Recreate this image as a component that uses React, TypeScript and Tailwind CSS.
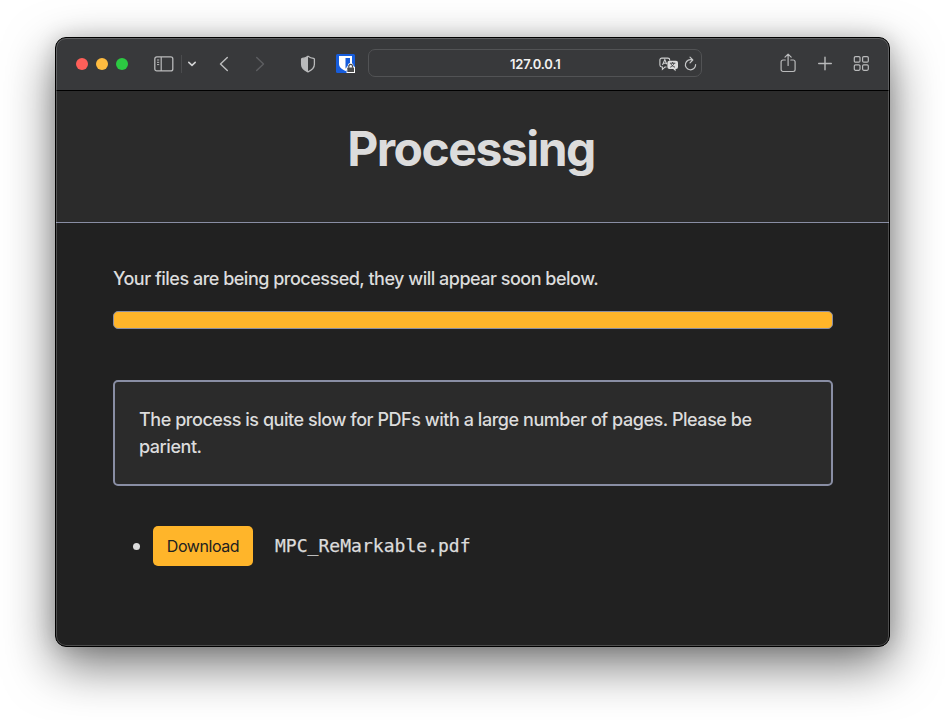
import React from "react";

function SidebarIcon() {
  return (
    <svg width="20" height="16" viewBox="0 0 20 16" fill="none" stroke="#b9babb" className="ml-[26px] shrink-0">
      <rect x="0.8" y="0.9" width="18" height="14" rx="2" strokeWidth="1.3" />
      <path d="M7.2 1v14" strokeWidth="1.2" />
      <path d="M3 4h2.2M3 6.3h2.2M3 8.6h2.2" strokeWidth="1" />
    </svg>
  );
}

function ShieldIcon() {
  return (
    <svg width="16" height="18" viewBox="0 0 16 18" className="ml-[35px] shrink-0">
      <path d="M8 1.2c1.8 1.3 3.7 2 5.6 2.2.5.1.8.4.8.9v4.9c0 3.7-2.4 5.9-6.4 7.6-4-1.7-6.4-3.9-6.4-7.6V4.300c0-.5.3-.8.8-.9C4.300 3.200 6.200 2.500 8 1.200Z" fill="none" stroke="#b9babb" strokeWidth="1.3" />
      <path d="M8 1.200v15.600c-4-1.700-6.400-3.900-6.400-7.600V4.300c0-.5.3-.8.8-.9C4.300 3.200 6.200 2.500 8 1.200Z" fill="#b9babb" />
    </svg>
  );
}

function VaultIcon() {
  return (
    <svg width="20" height="20" viewBox="0 0 20 20" className="ml-[20px] shrink-0">
      <rect x="0" y="0" width="19" height="19" rx="1.5" fill="#175ddc" />
      <path d="M3 2h13v8c0 3-2.500 5-6.500 7C5.500 15 3 13 3 10Z" fill="#fff" />
      <path d="M9.500 4h4.500v6c0 2-1.500 3.200-4.500 4.500Z" fill="#175ddc" />
      <path d="M10.500 19v-6l1.300-1V11.800a2.800 2.800 0 0 1 5.600 0v.2l1.600 1V19Z" fill="#fff" />
      <rect x="11.300" y="13.600" width="6.700" height="4.500" rx="0.600" fill="#4b4b4b" />
      <path d="M12.800 13.800v-1.500a1.850 1.850 0 0 1 3.700 0v1.500" fill="none" stroke="#4b4b4b" strokeWidth="1.200" />
    </svg>
  );
}

function TranslateIcon() {
  return (
    <svg width="20" height="15" viewBox="0 0 20 15" className="shrink-0">
      <path d="M7.500 10H6l-2.600 2.300V10H2.800A1.900 1.900 0 0 1 .9 8.100V3A1.900 1.900 0 0 1 2.800 1.100h6A1.900 1.900 0 0 1 10.700 3v.4" fill="none" stroke="#d0d1d2" strokeWidth="1.100" />
      <path d="M3.500 8 5.800 2.600 7.800 7.300M4.400 6.200h2.800" fill="none" stroke="#d0d1d2" strokeWidth="1.100" />
      <path d="M10.400 3.700h6.600a2 2 0 0 1 2 2v4.400a2 2 0 0 1-2 2h-.4v2.200l-2.400-2.200h-3.800a2 2 0 0 1-2-2V5.700a2 2 0 0 1 2-2Z" fill="#dcdcdc" />
      <path d="M10.900 6.200h5.400M13.600 5v1.200M11.200 10.200c2-.8 3.300-2 3.800-4M12 6.700c.5 1.700 1.900 2.800 4 3.500" fill="none" stroke="#38393b" strokeWidth="0.900" />
    </svg>
  );
}

function Toolbar() {
  return (
    <div className="flex h-[53px] items-center border-b border-black bg-[#38393b] pl-[20px]">
      <div className="flex shrink-0 gap-[8px]">
        <span className="size-[12px] rounded-full bg-[#ff5f59]" />
        <span className="size-[12px] rounded-full bg-[#ffbc40]" />
        <span className="size-[12px] rounded-full bg-[#2cc942]" />
      </div>
      <SidebarIcon />
      <span className="ml-[7px] h-[18px] w-px bg-[#4b4c4e]" />
      <svg width="10" height="6" viewBox="0 0 10 6" fill="none" stroke="#d2d3d4" strokeWidth="1.600" strokeLinecap="round" strokeLinejoin="round" className="ml-[5px] shrink-0">
        <path d="M1.800 1.400 5 4.300 8.200 1.400" />
      </svg>
      <svg width="10" height="16" viewBox="0 0 10 16" fill="none" stroke="#b9babb" strokeWidth="1.500" strokeLinecap="round" strokeLinejoin="round" className="ml-[22px] shrink-0">
        <path d="M8.300 1.500 1.500 8l6.800 6.500" />
      </svg>
      <svg width="10" height="16" viewBox="0 0 10 16" fill="none" stroke="#5c5d60" strokeWidth="1.500" strokeLinecap="round" strokeLinejoin="round" className="ml-[26px] shrink-0">
        <path d="M1.700 1.500 8.500 8l-6.800 6.500" />
      </svg>
      <ShieldIcon />
      <VaultIcon />
      <div className="-mt-[2px] ml-[12px] flex h-[28px] w-[334px] shrink-0 items-center rounded-[7px] border border-[#525355] pl-[141px] pr-[3px]">
        <span className="w-[53px] whitespace-nowrap pt-[3px] text-[13px] font-semibold tracking-[-0.150px] text-[#f1f1f1]">127.0.0.1</span>
        <span className="ml-auto flex items-center gap-[5px] pt-[2px]">
          <TranslateIcon />
          <svg width="14" height="16" viewBox="0 0 14 16" fill="none" stroke="#c5c6c7" strokeWidth="1.200" strokeLinecap="round" strokeLinejoin="round" className="shrink-0">
            <path d="M8.500 4A5.100 5.100 0 1 0 11.600 8.700M6 1.200 8.800 4 6 6.800" />
          </svg>
        </span>
      </div>
      <svg width="16" height="20" viewBox="0 0 16 20" fill="none" stroke="#b9babb" strokeWidth="1.200" strokeLinecap="round" strokeLinejoin="round" className="-mt-[3px] ml-[78px] shrink-0">
        <path d="M5.300 7H3a1.900 1.900 0 0 0-1.900 1.900v7.700A1.900 1.900 0 0 0 3 18.500h10.200a1.900 1.900 0 0 0 1.900-1.900V8.900A1.900 1.900 0 0 0 13.200 7H10.800M8.100 12.500V1.200M5 4.200l3.100-3.100 3.100 3.100" />
      </svg>
      <svg width="16" height="16" viewBox="0 0 16 16" stroke="#b9babb" strokeWidth="1.400" strokeLinecap="round" className="ml-[21px] shrink-0">
        <path d="M8 1.200v12.600M1.700 7.500h12.600" />
      </svg>
      <svg width="16" height="16" viewBox="0 0 16 16" fill="none" stroke="#b9babb" strokeWidth="1.200" className="ml-[20px] shrink-0">
        <rect x="1.300" y="0.600" width="5.700" height="5.500" rx="1.200" />
        <rect x="9.600" y="0.600" width="5.700" height="5.500" rx="1.200" />
        <rect x="1.300" y="8.800" width="5.700" height="5.500" rx="1.200" />
        <rect x="9.600" y="8.800" width="5.700" height="5.500" rx="1.200" />
      </svg>
    </div>
  );
}

export default function App() {
  return (
    <div className="h-[720px] w-[945px] overflow-hidden bg-white pl-[55px] pt-[37px] font-['Inter','Liberation_Sans',sans-serif] text-[#dcdcdc]">
      <div className="h-[610px] w-[835px] rounded-[11px] shadow-[0_18px_50px_rgba(0,0,0,0.550),0_0_20px_rgba(0,0,0,0.150)]">
        <div className="relative h-full overflow-hidden rounded-[11px] border border-black bg-[#212121] after:pointer-events-none after:absolute after:inset-0 after:rounded-[10px] after:border after:border-white/20">
          <Toolbar />
          <header className="flex h-[132px] justify-center border-b border-[#898ea4] bg-[#2b2b2b] pr-[3px] pt-[29px]">
            <h1 className="whitespace-nowrap text-[48px] font-bold leading-[58px] tracking-[-1.500px]">Processing</h1>
          </header>
          <main className="px-[57px] pt-[42px] text-[18px] font-[450] leading-[27px]">
            <p className="whitespace-nowrap tracking-[-0.500px]">Your files are being processed, they will appear soon below.</p>
            <div className="mt-[19px] h-[18px] w-[720px] rounded-[5px] border border-[#898ea4] bg-[#ffb52a]" />
            <div className="mt-[51px] h-[106px] w-[720px] rounded-[5px] border-2 border-[#898ea4] bg-[#2b2b2b] px-[24px] pt-[24px]">
              <p className="whitespace-nowrap tracking-[-0.455px]">
                The process is quite slow for PDFs with a large number of pages. Please be
                <br />
                parient.
              </p>
            </div>
            <ul className="mt-[40px]">
              <li className="flex h-[40px] items-center pl-[20px]">
                <span className="size-[7px] rounded-full bg-[#dcdcdc]" />
                <button className="ml-[13px] h-[40px] w-[100px] rounded-[5px] bg-[#ffb52a] text-[16px] font-normal tracking-[-0.440px] text-[#212121]">Download</button>
                <span className="-mt-[2px] ml-[22px] whitespace-nowrap font-['DejaVu_Sans_Mono',monospace] text-[18px] font-normal tracking-[0.030px] [-webkit-text-stroke:0.250px_#dcdcdc]">MPC_ReMarkable.pdf</span>
              </li>
            </ul>
          </main>
        </div>
      </div>
    </div>
  );
}
